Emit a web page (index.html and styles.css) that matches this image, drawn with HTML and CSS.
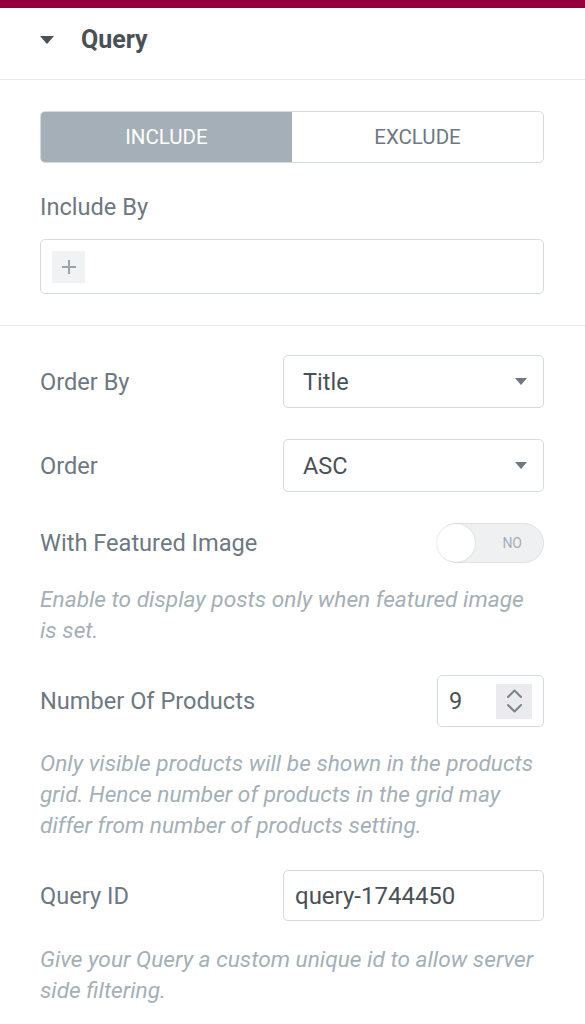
FILE: index.html
```html
<!DOCTYPE html>
<html>
<head>
<meta charset="utf-8">
<link rel="stylesheet" href="styles.css">
</head>
<body>
<div class="topbar"></div>
<div class="panel-header">
  <span class="caret-down"></span>
  <span class="panel-title">Query</span>
</div>
<div class="section">
  <div class="tabs">
    <div class="tab active">INCLUDE</div>
    <div class="tab">EXCLUDE</div>
  </div>
  <div class="label block-label">Include By</div>
  <div class="tags-input">
    <span class="plus-btn">
      <svg width="16" height="16" viewBox="0 0 16 16"><path d="M8 1v14M1 8h14" stroke="#9aa3ab" stroke-width="2" fill="none"/></svg>
    </span>
  </div>
</div>
<div class="section section2">
  <div class="row">
    <div class="label">Order By</div>
    <div class="select"><span>Title</span><span class="select-caret"></span></div>
  </div>
  <div class="row">
    <div class="label">Order</div>
    <div class="select"><span>ASC</span><span class="select-caret"></span></div>
  </div>
  <div class="row">
    <div class="label">With Featured Image</div>
    <div class="switch"><span class="knob"></span><span class="switch-text">NO</span></div>
  </div>
  <p class="desc">Enable to display posts only when featured image is set.</p>
  <div class="row">
    <div class="label">Number Of Products</div>
    <div class="number">
      <span>9</span>
      <span class="spinner">
        <svg width="17" height="26" viewBox="0 0 17 26"><path d="M2 9l6.5-6.5L15 9M2 17l6.5 6.5L15 17" stroke="#7a838b" stroke-width="2" fill="none" stroke-linecap="round" stroke-linejoin="round"/></svg>
      </span>
    </div>
  </div>
  <p class="desc">Only visible products will be shown in the products grid. Hence number of products in the grid may differ from number of products setting.</p>
  <div class="row">
    <div class="label">Query ID</div>
    <div class="select text-input"><span>query-1744450</span></div>
  </div>
  <p class="desc last-desc">Give your Query a custom unique id to allow server side filtering.</p>
</div>
</body>
</html>
```
FILE: styles.css
```css
* { box-sizing: border-box; }
html, body { margin: 0; padding: 0; background: #fff; }
body {
  width: 585px;
  font-family: Roboto, "Liberation Sans", sans-serif;
  color: #6d7882;
}
.topbar { height: 8px; background: #93003c; }
.panel-header {
  height: 72px;
  border-bottom: 1px solid #e6e8ea;
  display: flex;
  align-items: center;
  padding-left: 40px;
  padding-bottom: 8px;
}
.caret-down {
  width: 0; height: 0;
  border-left: 7.5px solid transparent;
  border-right: 7.5px solid transparent;
  border-top: 8px solid #495157;
  margin-right: 27px;
}
.panel-title {
  font-size: 25px;
  font-weight: 700;
  color: #495157;
}
.section {
  padding: 31px 41px 31px 40px;
  border-bottom: 1px solid #e6e8ea;
}
.section2 { border-bottom: none; padding-top: 29px; }
.tabs {
  display: flex;
  height: 52px;
  border: 1px solid #d5dadf;
  border-radius: 5px;
  overflow: hidden;
}
.tab {
  flex: 1;
  display: flex;
  align-items: center;
  justify-content: center;
  font-size: 20.5px;
  color: #6d7882;
}
.tab.active { background: #a4afb7; color: #fff; }
.label { font-size: 23.6px; color: #6d7882; line-height: 30px; }
.block-label { margin-top: 29px; margin-bottom: 17px; }
.tags-input {
  height: 55px;
  border: 1px solid #d5dadf;
  border-radius: 5px;
  padding: 10px 11px;
  display: flex;
  align-items: center;
}
.plus-btn {
  width: 33px; height: 32px;
  background: #f1f2f4;
  display: flex;
  align-items: center;
  justify-content: center;
}
.row {
  display: flex;
  align-items: center;
  justify-content: space-between;
  margin-top: 31px;
}
.row:first-child { margin-top: 0; }
.select {
  width: 261px;
  height: 53px;
  border: 1px solid #d5dadf;
  border-radius: 5px;
  display: flex;
  align-items: center;
  justify-content: space-between;
  padding: 0 16px 0 19px;
  font-size: 23.5px;
  color: #495157;
}
.text-input { height: 51px; padding-left: 11px; font-size: 24px; }
.select-caret {
  width: 0; height: 0;
  border-left: 6px solid transparent;
  border-right: 6px solid transparent;
  border-top: 7px solid #6d7882;
}
.switch {
  width: 107px;
  height: 40px;
  border-radius: 20px;
  background: #eef0f2;
  border: 1px solid #dfe2e5;
  display: flex;
  align-items: center;
  justify-content: space-between;
  padding-right: 21px;
}
.knob {
  width: 38px; height: 38px;
  border-radius: 50%;
  background: #fff;
  box-shadow: 0 0 2px rgba(0,0,0,0.15);
  margin-left: -1px;
}
.switch-text { font-size: 14px; color: #a4afb7; }
.desc {
  margin: 21px 0 0;
  padding-right: 4px;
  font-size: 22.7px;
  line-height: 31px;
  font-style: italic;
  color: #a4afb7;
}
.number {
  width: 107px;
  height: 52px;
  border: 1px solid #d5dadf;
  border-radius: 5px;
  display: flex;
  align-items: center;
  justify-content: space-between;
  padding: 0 11px 0 11px;
  font-size: 23.5px;
  color: #495157;
}
.spinner {
  width: 36px; height: 35px;
  background: #ebebef;
  display: flex;
  align-items: center;
  justify-content: center;
}
.row + .desc { margin-top: 21px; }
.row + .last-desc { margin-top: 23px; }
.desc + .row { margin-top: 29px; }
```
